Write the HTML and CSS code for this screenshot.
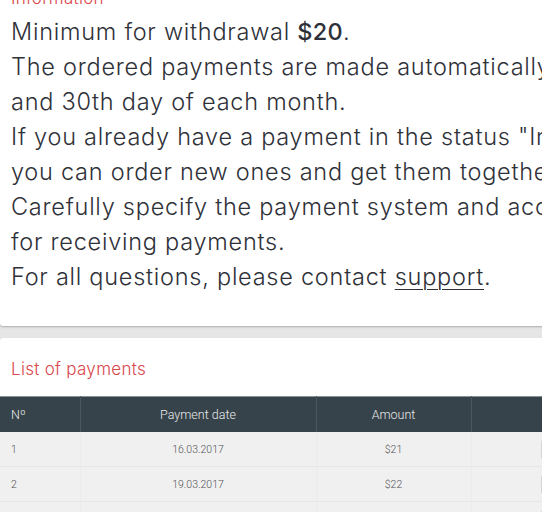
FILE: index.html
```html
<!DOCTYPE html>
<html>
<head>
<meta charset="utf-8">
<link rel="stylesheet" href="styles.css">
</head>
<body>
<div class="page">
  <section class="card info">
    <h2 class="card-title">Information</h2>
    <div class="info-text">
      <p>Minimum for withdrawal <b>$20</b>.</p>
      <p>The ordered payments are made automatically on the 10th, 20th<br>and 30th day of each month.</p>
      <p>If you already have a payment in the status "In processing",<br>you can order new ones and get them together.</p>
      <p>Carefully specify the payment system and account details<br>for receiving payments.</p>
      <p>For all questions, please contact <a href="#">support</a>.</p>
    </div>
  </section>
  <section class="card list">
    <h2 class="card-title">List of payments</h2>
    <table class="payments">
      <colgroup>
        <col class="w-num"><col class="w-date"><col class="w-amount"><col>
      </colgroup>
      <thead>
        <tr><th class="c-num">Nº</th><th class="c-date">Payment date</th><th class="c-amount">Amount</th><th class="c-status-h">Status</th></tr>
      </thead>
      <tbody>
        <tr><td class="c-num">1</td><td class="c-date">16.03.2017</td><td class="c-amount">$21</td><td class="c-status"><span class="badge">Paid</span></td></tr>
        <tr><td class="c-num">2</td><td class="c-date">19.03.2017</td><td class="c-amount">$22</td><td class="c-status"><span class="badge">Paid</span></td></tr>
        <tr><td class="c-num">3</td><td class="c-date">22.03.2017</td><td class="c-amount">$20</td><td class="c-status"><span class="badge">Paid</span></td></tr>
      </tbody>
    </table>
  </section>
</div>
</body>
</html>
```
FILE: styles.css
```css
html, body {
  margin: 0;
  padding: 0;
  background: #e6e6e6;
  overflow: hidden;
}
body {
  font-family: Inter, "Noto Sans", sans-serif;
  color: #2f3139;
}
.page {
  width: 760px;
  margin-top: -39px;
  display: flex;
  flex-direction: column;
  gap: 12px;
}
.card {
  background: #fff;
  border-radius: 3px;
  box-shadow: 0 1px 2px rgba(0,0,0,0.25);
}
.card-title {
  margin: 0;
  font-size: 17px;
  font-weight: 300;
  color: #d9464b;
  line-height: 20px;
  letter-spacing: 0.3px;
}
.info {
  padding: 27px 11px 32px;
}
.info-text {
  margin-top: 6px;
}
.info-text p {
  margin: 0;
  font-size: 23.5px;
  font-weight: 300;
  line-height: 35px;
  white-space: nowrap;
  letter-spacing: 0.75px;
}
.info-text b {
  font-weight: 500;
  letter-spacing: 0.3px;
}
.info-text a {
  color: #2f3139;
  text-decoration: underline;
  text-underline-offset: 4px;
  text-decoration-thickness: 1px;
}
.list {
  padding-top: 21px;
}
.list .card-title {
  padding: 0 11px;
}
.payments {
  margin-top: 17px;
  border-collapse: collapse;
  table-layout: fixed;
  width: 100%;
  font-family: Roboto, "Noto Sans", sans-serif;
}
.w-num { width: 80px; }
.w-date { width: 236px; }
.w-amount { width: 155px; }
.payments thead tr {
  background: #37434a;
  border-top: 1px solid #8a9196;
}
.payments th {
  height: 35px;
  padding: 0;
  font-size: 12.5px;
  font-weight: 300;
  color: #e8eaeb;
  border-left: 1px solid #4b565d;
}
.payments th:first-child, .payments td:first-child {
  border-left: none;
}
.payments td {
  height: 34px;
  padding: 0;
  font-size: 10.5px;
  font-weight: 300;
  color: #505255;
  background: #f0f0f0;
  border-bottom: 1px solid #e6e6e6;
  border-left: 1px solid #ebebeb;
}
.c-num { text-align: left; padding-left: 11px !important; }
.c-date { text-align: center; }
.c-amount { text-align: center; }
.c-status-h { text-align: center; }
.c-status { text-align: left; padding-left: 69px !important; }
.badge {
  display: inline-block;
  background: #d5d5d5;
  color: #555;
  padding: 3px 8px;
  border-radius: 2px;
}
```
